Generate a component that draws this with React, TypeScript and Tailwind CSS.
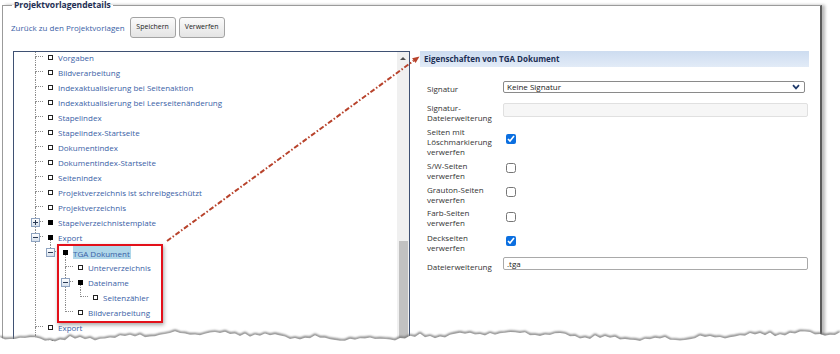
import React from 'react';

type Row = {
  label: string;
  guides: boolean[]; // one per ancestor level: does the line keep going
  last?: boolean;
  toggle?: 'plus' | 'minus';
  folder?: boolean;
  open?: boolean;
  selected?: boolean;
};

const leaf = (label: string): Row => ({ label, guides: [] });

const rows: Row[] = [
  leaf('Vorgaben'),
  leaf('Bildverarbeitung'),
  leaf('Indexaktualisierung bei Seitenaktion'),
  leaf('Indexaktualisierung bei Leerseitenänderung'),
  leaf('Stapelindex'),
  leaf('Stapelindex-Startseite'),
  leaf('Dokumentindex'),
  leaf('Dokumentindex-Startseite'),
  leaf('Seitenindex'),
  leaf('Projektverzeichnis ist schreibgeschützt'),
  leaf('Projektverzeichnis'),
  { label: 'Stapelverzeichnistemplate', guides: [], toggle: 'plus', folder: true },
  { label: 'Export', guides: [], toggle: 'minus', folder: true, open: true },
  { label: 'TGA Dokument', guides: [true], last: true, toggle: 'minus', folder: true, open: true, selected: true },
  { label: 'Unterverzeichnis', guides: [true, false] },
  { label: 'Dateiname', guides: [true, false], toggle: 'minus', folder: true, open: true },
  { label: 'Seitenzähler', guides: [true, false, true], last: true },
  { label: 'Bildverarbeitung', guides: [true, false], last: true },
  leaf('Export'),
  leaf('Softwarezähler'),
];

// torn paper edge along the bottom of the screenshot
const tearPts = (() => {
  const pts: string[] = [];
  for (let x = 0; x <= 840; x += 5) {
    const y =
      13 +
      Math.sin(x * 0.021 + 0.4) * 3 +
      Math.sin(x * 0.13 + 1) * 1.4 +
      Math.sin(x * 0.61) * 0.9 +
      (x % 35 === 0 ? -1.5 : 0);
    pts.push(`${x},${y.toFixed(1)}`);
  }
  return pts.join(' ');
})();

const dot = 'border-dotted border-[#8c8c8c]';

function Toggle({ kind }: { kind: 'plus' | 'minus' }) {
  return (
    <span className="absolute left-[3px] top-[3px] flex h-[9px] w-[9px] items-center justify-center border border-[#8ea3c0] bg-gradient-to-b from-white to-[#d6e0ec]">
      <span className="relative block h-px w-[5px] bg-[#2a3a55]">
        {kind === 'plus' && <span className="absolute left-[2px] top-[-2px] block h-[5px] w-px bg-[#2a3a55]" />}
      </span>
    </span>
  );
}

function TreeRow({ row }: { row: Row }) {
  return (
    <div className="flex h-[15px] pl-[14px]">
      {row.guides.map((g, i) => (
        <div key={i} className="w-[15px] shrink-0">
          {g && <div className={`ml-[7px] h-full border-l ${dot}`} />}
        </div>
      ))}
      <div className="relative w-[15px] shrink-0">
        <div className={`ml-[7px] h-[7px] w-[8px] border-b border-l ${dot}`} />
        {!row.last && <div className={`ml-[7px] h-[8px] border-l ${dot}`} />}
        {row.toggle && <Toggle kind={row.toggle} />}
      </div>
      <div className="flex w-[15px] shrink-0 flex-col">
        <div className="h-[5px]" />
        <div
          className={`ml-[5px] h-[5px] w-[5px] ${row.folder ? 'bg-black' : 'border border-[#222] bg-white'}`}
        />
        {row.open && <div className={`ml-[7px] flex-1 border-l ${dot}`} />}
      </div>
      <span
        className={`whitespace-nowrap text-[8px] leading-[15px] text-[#3a61a6] ${row.selected ? 'h-[13px] self-center bg-[#afd7ea] pr-[1px] leading-[13px]' : ''}`}
      >
        {row.label}
      </span>
    </div>
  );
}

function Check({ checked, top }: { checked?: boolean; top: string }) {
  return (
    <input
      type="checkbox"
      defaultChecked={checked}
      className={`m-0 ml-[3px] h-[10px] w-[10px] accent-[#0b6fe0] ${top}`}
    />
  );
}

export default function App() {
  return (
    <div className="relative h-[354px] w-[840px] overflow-hidden bg-white font-['Open_Sans',sans-serif]">
      <fieldset className="m-0 ml-[2px] h-[400px] w-[820px] min-w-0 border border-r-2 border-[#9b9b9b] border-r-[#5c5c5c] p-0 shadow-[3px_0_3px_rgba(0,0,0,0.28)]">
        <legend className="ml-[9px] px-[2px] text-[8.5px] font-bold leading-[10px] text-[#1f2f55]">
          Projektvorlagendetails
        </legend>

        <div className="mt-[7px] flex items-center pl-[8px]">
          <a className="text-[8px] text-[#3a61a6]">Zurück zu den Projektvorlagen</a>
          <button
            type="button"
            className="ml-[5px] h-[21px] w-[46px] rounded-[3px] border border-[#a3a3a3] bg-gradient-to-b from-[#fbfbfb] to-[#e4e4e4] text-[7px] text-[#222]"
          >
            Speichern
          </button>
          <button
            type="button"
            className="ml-[3px] h-[21px] w-[46px] rounded-[3px] border border-[#a3a3a3] bg-gradient-to-b from-[#fbfbfb] to-[#e4e4e4] text-[7px] text-[#222]"
          >
            Verwerfen
          </button>
        </div>

        <div className="mt-[13px] flex items-start pl-[10px]">
          {/* tree */}
          <div className="flex h-[300px] w-[397px] border border-[#3f5173]">
            <div className="flex-1 overflow-hidden">
              <div className="-mt-[2px]">
                {rows.map((r, i) => (
                  <TreeRow key={i} row={r} />
                ))}
              </div>
            </div>
            <div className="flex w-[12px] flex-col bg-[#f0f0f0]">
              <div className="mx-auto mt-[5px] h-0 w-0 border-x-[3px] border-b-[3px] border-x-transparent border-b-[#505050]" />
              <div className="ml-[2px] mt-[181px] w-[9px] flex-1 bg-[#c1c1c1]" />
            </div>
          </div>

          {/* properties */}
          <div className="ml-[10px] w-[389px] text-[8px] leading-[10px] text-[#333]">
            <div className="flex h-[16px] items-center bg-gradient-to-b from-[#cddcf0] to-[#e2ebf7] pl-[4px] font-bold text-[#1c2f55]">
              Eigenschaften von TGA Dokument
            </div>

            <div className="pl-[7px]">
              <div className="mt-[14px] flex">
                <div className="w-[76px] shrink-0 pt-[3px]">Signatur</div>
                <div className="relative">
                  <select
                    defaultValue="keine"
                    className="h-[12px] w-[302px] appearance-none rounded-[2px] border border-[#8a8a8a] bg-white py-0 pl-[3px] text-[8px] leading-[10px] text-[#222] outline-none"
                  >
                    <option value="keine">Keine Signatur</option>
                  </select>
                  <svg className="pointer-events-none absolute right-[5px] top-[3px]" width="8" height="6" viewBox="0 0 8 6">
                    <path d="M1 1.2 L4 4.4 L7 1.2" fill="none" stroke="#1f3a6b" strokeWidth="1.7" />
                  </svg>
                </div>
              </div>

              <div className="mt-[9px] flex">
                <div className="w-[76px] shrink-0">
                  Signatur-
                  <br />
                  Dateierweiterung
                </div>
                <input
                  disabled
                  className="h-[14px] w-[305px] rounded-[2px] border border-[#e0e0e0] bg-[#f6f6f6]"
                />
              </div>

              <div className="mt-[4px] flex items-start">
                <div className="w-[76px] shrink-0">
                  Seiten mit
                  <br />
                  Löschmarkierung
                  <br />
                  verwerfen
                </div>
                <Check checked top="mt-[7px]" />
              </div>

              <div className="mt-[4px] flex items-start">
                <div className="w-[76px] shrink-0">
                  S/W-Seiten
                  <br />
                  verwerfen
                </div>
                <Check top="mt-[2px]" />
              </div>

              <div className="mt-[4px] flex items-start">
                <div className="w-[76px] shrink-0">
                  Grauton-Seiten
                  <br />
                  verwerfen
                </div>
                <Check top="mt-[2px]" />
              </div>

              <div className="mt-[3px] flex items-start">
                <div className="w-[76px] shrink-0">
                  Farb-Seiten
                  <br />
                  verwerfen
                </div>
                <Check top="mt-[4px]" />
              </div>

              <div className="mt-[5px] flex items-start">
                <div className="w-[76px] shrink-0">
                  Deckseiten
                  <br />
                  verwerfen
                </div>
                <Check checked top="mt-[3px]" />
              </div>

              <div className="mt-[4px] flex items-start">
                <div className="w-[76px] shrink-0 pt-[5px]">Dateierweiterung</div>
                <input
                  defaultValue=".tga"
                  className="h-[13px] w-[305px] rounded-[2px] border border-[#a9a9a9] bg-white pl-[3px] text-[8px] leading-[11px] text-[#222] outline-none"
                />
              </div>
            </div>
          </div>
        </div>
      </fieldset>

      {/* callout: red frame + arrow */}
      <div className="pointer-events-none absolute left-[57px] top-[244px] h-[79px] w-[106px] border-2 border-[#e3101a] shadow-[1px_2px_4px_rgba(0,0,0,0.35)]" />
      <svg className="pointer-events-none absolute left-0 top-0" width="840" height="354">
        <line
          x1="167"
          y1="241"
          x2="413.8"
          y2="60.6"
          stroke="#b8432c"
          strokeWidth="2"
          strokeDasharray="5 2 1.5 2"
        />
        <polygon points="419.5,56.5 415.6,63.0 412.1,58.2" fill="#b8432c" />
      </svg>

      {/* torn bottom edge */}
      <svg className="pointer-events-none absolute left-0 top-[322px]" width="840" height="32">
        <defs>
          <filter id="blur" x="-5%" y="-50%" width="110%" height="200%">
            <feGaussianBlur stdDeviation="1" />
          </filter>
        </defs>
        <polyline points={tearPts} fill="none" stroke="#6f6f6f" strokeWidth="2.2" filter="url(#blur)" transform="translate(0 1)" />
        <polygon points={`0,32 ${tearPts} 840,32`} fill="#fff" transform="translate(0 1.5)" />
      </svg>
    </div>
  );
}
